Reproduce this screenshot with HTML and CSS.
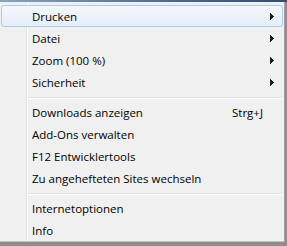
FILE: index.html
```html
<!DOCTYPE html>
<html lang="de">
<head>
    <meta charset="UTF-8">
    <title>Extras</title>
    <link rel="stylesheet" href="styles.css">
</head>
<body>
    <div class="title-strip"></div>
    <div class="menu">
        <div class="item hot">
            <span class="label">Drucken</span>
            <span class="key"></span>
            <span class="arrow"><svg width="4" height="7" viewBox="0 0 4 7"><rect x="0" y="0" width="1" height="7"/><rect x="1" y="1" width="1" height="5"/><rect x="2" y="2" width="1" height="3"/><rect x="3" y="3" width="1" height="1"/></svg></span>
        </div>
        <div class="item">
            <span class="label">Datei</span>
            <span class="key"></span>
            <span class="arrow"><svg width="4" height="7" viewBox="0 0 4 7"><rect x="0" y="0" width="1" height="7"/><rect x="1" y="1" width="1" height="5"/><rect x="2" y="2" width="1" height="3"/><rect x="3" y="3" width="1" height="1"/></svg></span>
        </div>
        <div class="item">
            <span class="label">Zoom (100 %)</span>
            <span class="key"></span>
            <span class="arrow"><svg width="4" height="7" viewBox="0 0 4 7"><rect x="0" y="0" width="1" height="7"/><rect x="1" y="1" width="1" height="5"/><rect x="2" y="2" width="1" height="3"/><rect x="3" y="3" width="1" height="1"/></svg></span>
        </div>
        <div class="item">
            <span class="label">Sicherheit</span>
            <span class="key"></span>
            <span class="arrow"><svg width="4" height="7" viewBox="0 0 4 7"><rect x="0" y="0" width="1" height="7"/><rect x="1" y="1" width="1" height="5"/><rect x="2" y="2" width="1" height="3"/><rect x="3" y="3" width="1" height="1"/></svg></span>
        </div>

        <div class="sep"></div>

        <div class="item">
            <span class="label">Downloads anzeigen</span>
            <span class="key">Strg+J</span>
            <span class="arrow"></span>
        </div>
        <div class="item">
            <span class="label">Add-Ons verwalten</span>
            <span class="key"></span>
            <span class="arrow"></span>
        </div>
        <div class="item">
            <span class="label">F12 Entwicklertools</span>
            <span class="key"></span>
            <span class="arrow"></span>
        </div>
        <div class="item">
            <span class="label">Zu angehefteten Sites wechseln</span>
            <span class="key"></span>
            <span class="arrow"></span>
        </div>

        <div class="sep"></div>

        <div class="item">
            <span class="label">Internetoptionen</span>
            <span class="key"></span>
            <span class="arrow"></span>
        </div>
        <div class="item">
            <span class="label">Info</span>
            <span class="key"></span>
            <span class="arrow"></span>
        </div>
    </div>
</body>
</html>
```

FILE: styles.css
```css
body {
    margin: 0;
    background-color: #8e8e8e;
    font-family: 'Open Sans', sans-serif;
    font-size: 11.5px;
    color: #000000;
    overflow: hidden;
}

.title-strip {
    height: 2px;
    background: linear-gradient(to right, #8aa3bd, #4c6c8e 60%, #2f4f72);
}

.menu {
    width: 284px;
    padding-top: 3px;
    border-right: 1px solid #a0a0a0;
    border-bottom: 1px solid #c4c4c4;
    background:
        linear-gradient(to right,
            transparent 26px, #e2e3e3 26px, #e2e3e3 27px,
            #ffffff 27px, #ffffff 28px, transparent 28px),
        #f0f0f0;
}

.item {
    position: relative;
    display: flex;
    align-items: center;
    height: 22px;
    padding-left: 32px;
}

/* hover highlight */
.item.hot::before {
    content: '';
    position: absolute;
    top: 0;
    bottom: 0;
    left: 1px;
    right: 1px;
    border: 1px solid #a8cbf1;
    border-radius: 3px;
    background: linear-gradient(to bottom, #f4f7fc, #e6eef9);
}

.label, .key, .arrow {
    position: relative;
}

.label {
    flex: 1;
    white-space: nowrap;
}

.key {
    width: 38px;
    white-space: nowrap;
}

.arrow {
    width: 14px;
    display: flex;
    align-items: center;
}

.arrow svg {
    fill: #1e1e1e;
    margin-top: 1px;
}

.sep {
    height: 0;
    margin: 4px 2px 2px 29px;
    border-top: 1px solid #e0e0e0;
    border-bottom: 1px solid #ffffff;
}
```
